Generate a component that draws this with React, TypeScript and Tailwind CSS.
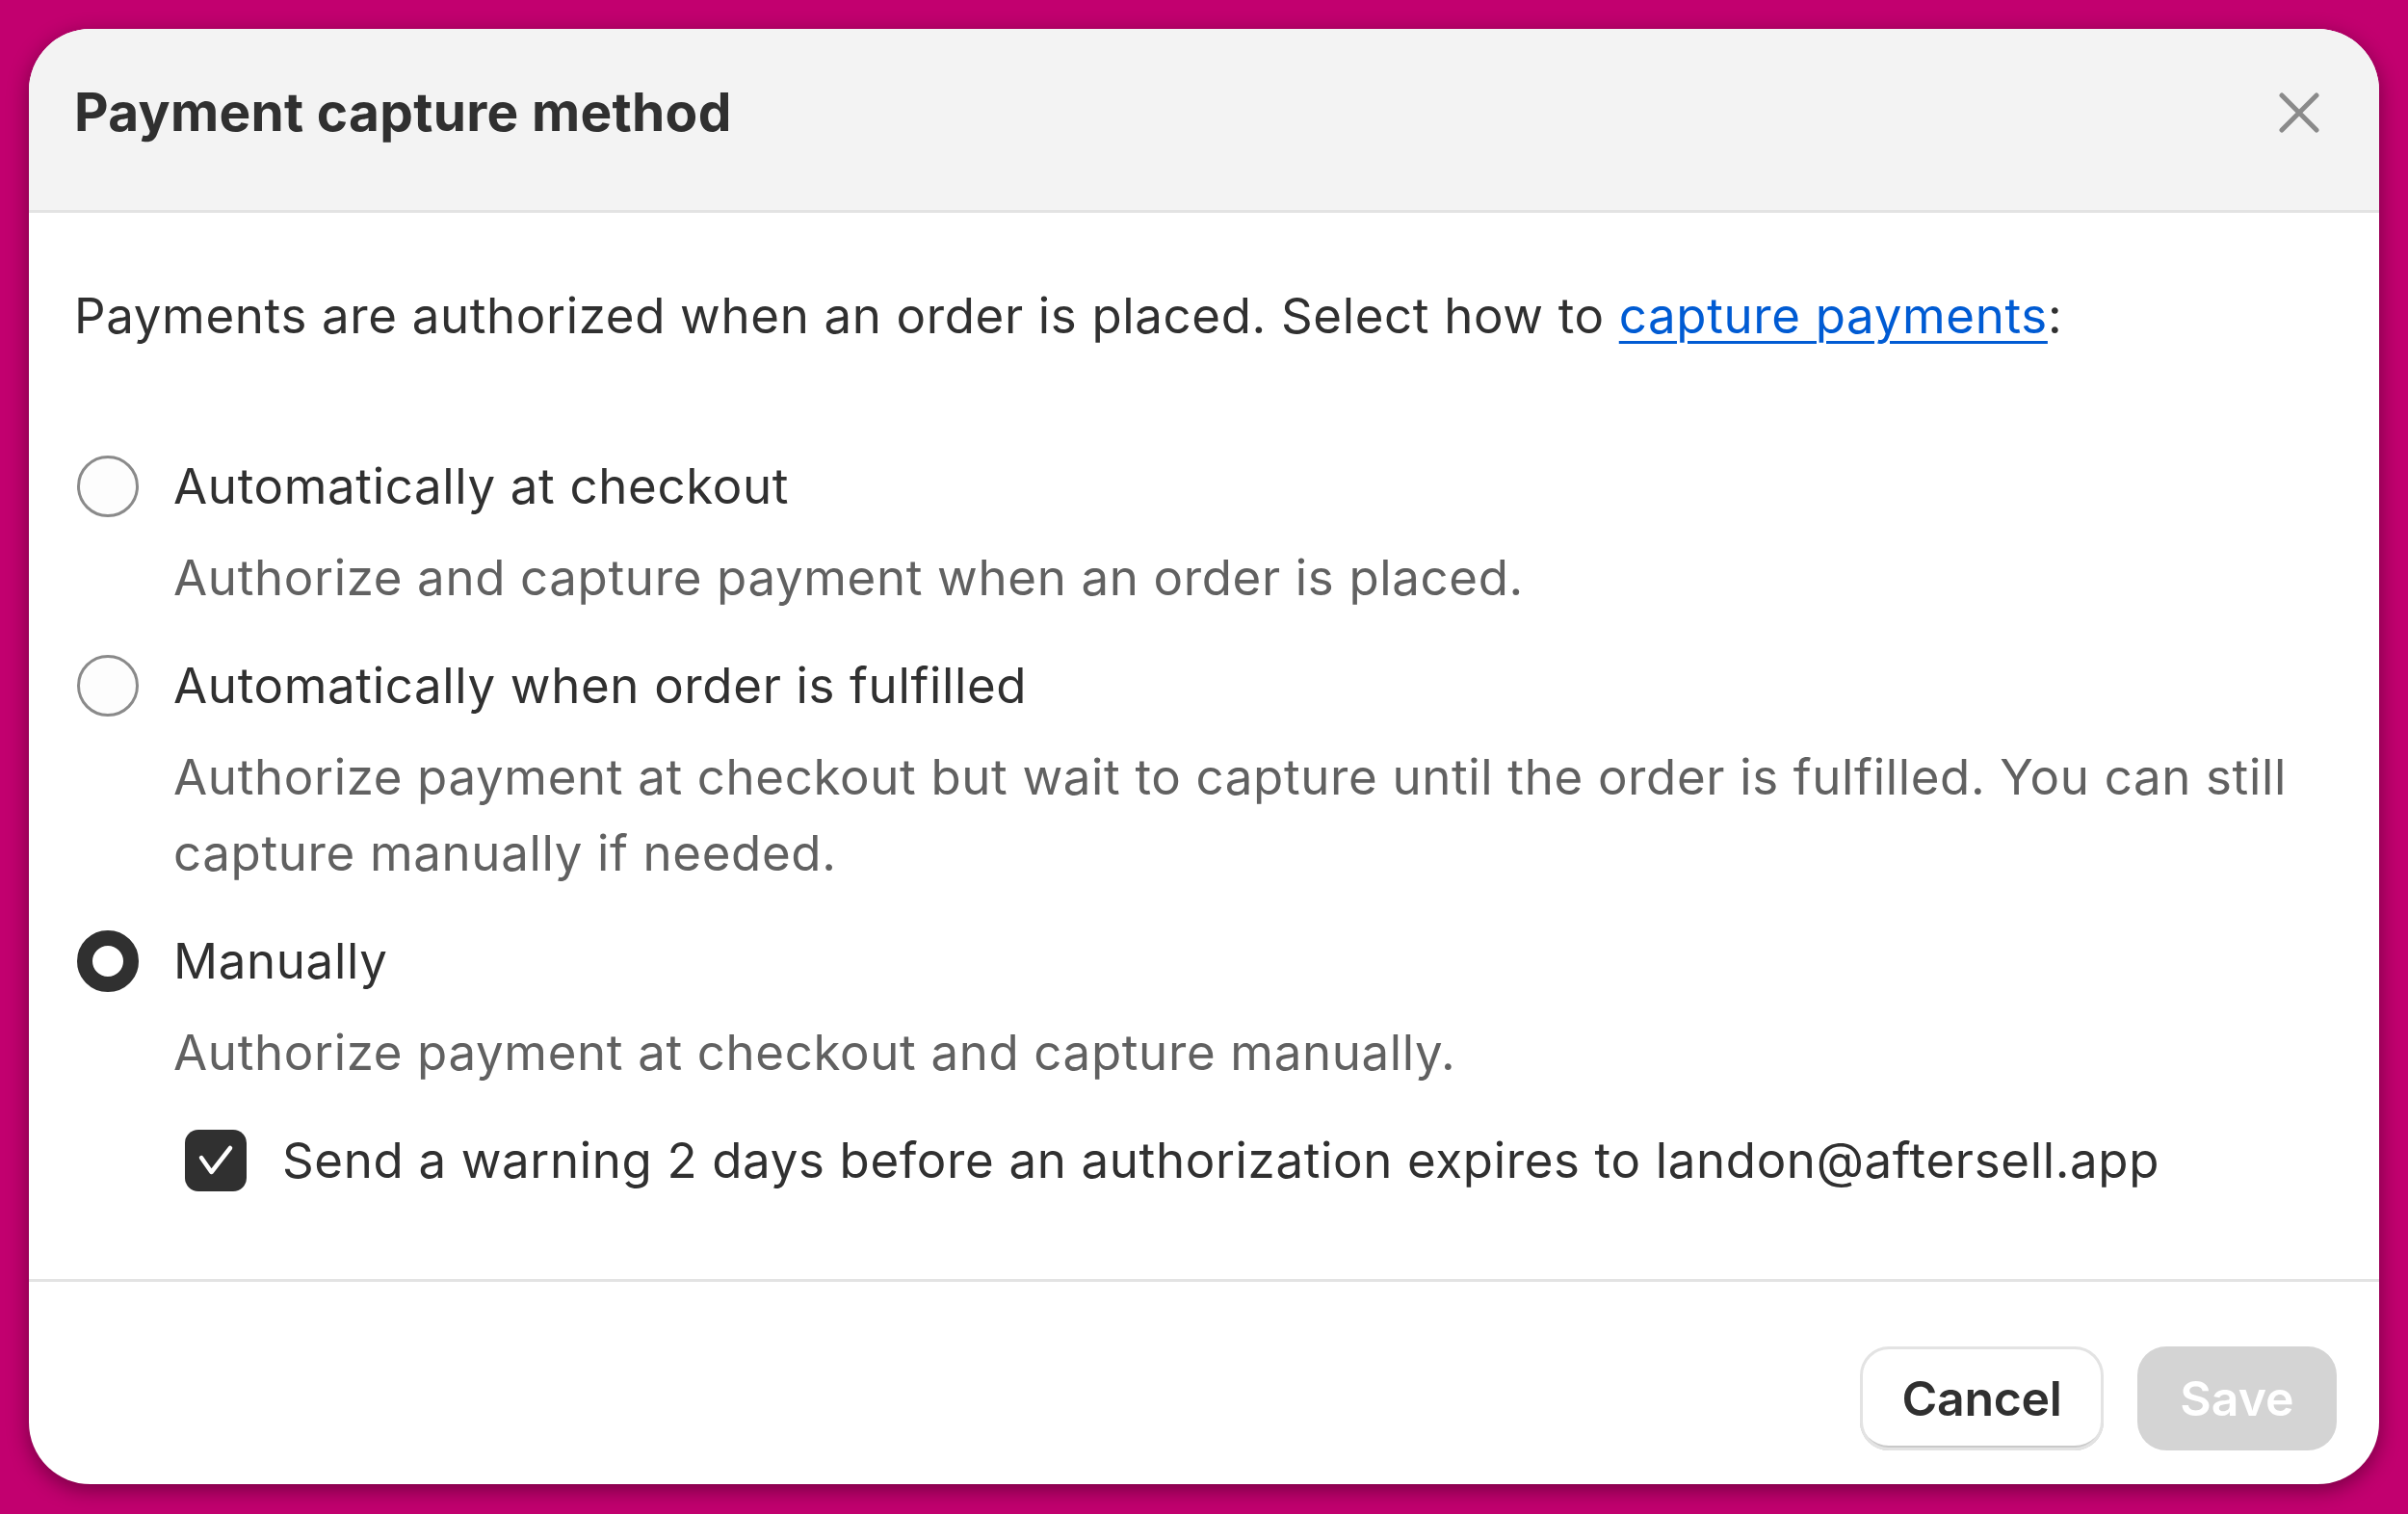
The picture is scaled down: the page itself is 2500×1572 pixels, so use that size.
import React from "react"

const options = [
  {
    label: "Automatically at checkout",
    desc: "Authorize and capture payment when an order is placed.",
    selected: false,
  },
  {
    label: "Automatically when order is fulfilled",
    desc: "Authorize payment at checkout but wait to capture until the order is fulfilled. You can still capture manually if needed.",
    selected: false,
  },
  {
    label: "Manually",
    desc: "Authorize payment at checkout and capture manually.",
    selected: true,
  },
]

function Radio({ selected }: { selected: boolean }) {
  return selected ? (
    <span className="ml-[3px] box-border block h-[64px] w-[64px] shrink-0 rounded-full border-[16px] border-[#303030] bg-white" />
  ) : (
    <span className="ml-[3px] box-border block h-[64px] w-[64px] shrink-0 rounded-full border-[3px] border-[#8a8a8a] bg-[#fdfdfd]" />
  )
}

export default function App() {
  return (
    <div
      className="h-[1572px] w-[2500px] overflow-hidden bg-[#c2006f] p-[30px]"
      style={{ fontFamily: "Inter, 'Noto Sans', sans-serif" }}
    >
      <div className="flex h-[1511px] w-[2440px] flex-col overflow-hidden rounded-[64px] bg-white shadow-[0_6px_22px_rgba(0,0,0,0.4)]">
        {/* header */}
        <div className="flex h-[191px] shrink-0 items-center justify-between border-b-[3px] border-[#e3e3e3] bg-[#f3f3f3] pb-[16px] pl-[47px] pr-[62px]">
          <h1 className="text-[55px] font-bold tracking-[0.3px] text-[#303030]">Payment capture method</h1>
          <svg width="42" height="42" viewBox="0 0 42 42" className="mt-[2px]">
            <path d="M3 3 L39 39 M39 3 L3 39" stroke="#8a8a8a" strokeWidth="5" strokeLinecap="round" fill="none" />
          </svg>
        </div>

        {/* body */}
        <div className="flex-1 px-[47px] pt-[67px] text-[51px] leading-[79px] tracking-[0.65px] text-[#303030]">
          <p>
            Payments are authorized when an order is placed. Select how to{" "}
            <a className="text-[#005bd3] underline decoration-[3px] underline-offset-[8px]">capture payments</a>:
          </p>

          <div className="mt-[98px] flex flex-col gap-[33px]">
            {options.map((o) => (
              <div key={o.label}>
                <div className="flex items-center gap-[36px]">
                  <Radio selected={o.selected} />
                  <span>{o.label}</span>
                </div>
                <p className="mt-[16px] pl-[103px] text-[#616161]">{o.desc}</p>
              </div>
            ))}
            <div className="flex items-center gap-[37px] pl-[115px]">
              <span className="flex h-[64px] w-[64px] shrink-0 items-center justify-center rounded-[14px] bg-[#303030]">
                <svg width="64" height="64" viewBox="0 0 64 64">
                  <path d="M17 29 L27.5 44 L47 19" stroke="#fff" strokeWidth="4.5" strokeLinecap="round" strokeLinejoin="round" fill="none" />
                </svg>
              </span>
              <span>Send a warning 2 days before an authorization expires to landon@aftersell.app</span>
            </div>
          </div>
        </div>

        {/* footer */}
        <div className="flex h-[213px] shrink-0 items-start justify-end gap-[35px] border-t-[3px] border-[#e3e3e3] pr-[44px] pt-[67px]">
          <button className="h-[108px] w-[253px] rounded-[30px] bg-white text-[50px] font-semibold tracking-[-0.3px] text-[#303030] shadow-[inset_0_0_0_3px_#e3e3e3,inset_0_-5px_0_#c9c9c9]">
            Cancel
          </button>
          <button className="h-[108px] w-[207px] rounded-[30px] bg-[#d4d4d4] text-[50px] font-semibold text-white">
            Save
          </button>
        </div>
      </div>
    </div>
  )
}
